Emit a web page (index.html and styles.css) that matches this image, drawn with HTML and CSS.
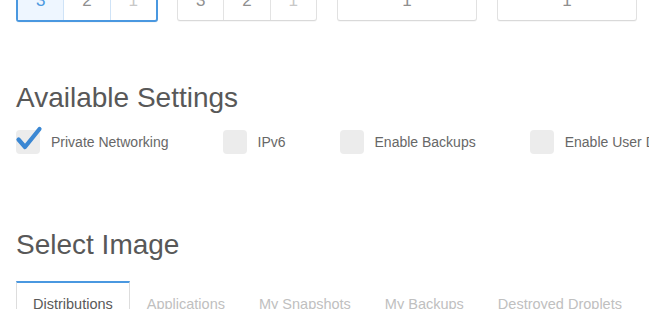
FILE: index.html
```html
<!DOCTYPE html>
<html lang="en">
<head>
<meta charset="utf-8">
<title>Create Droplet</title>
<link rel="stylesheet" href="styles.css">
</head>
<body>
<div class="page">
  <div class="plans">
    <div class="seg seg-active">
      <div class="cell cell-on">3</div>
      <div class="cell">2</div>
      <div class="cell cell-dim">1</div>
    </div>
    <div class="seg">
      <div class="cell">3</div>
      <div class="cell">2</div>
      <div class="cell cell-dim">1</div>
    </div>
    <div class="seg">
      <div class="cell">1</div>
    </div>
    <div class="seg">
      <div class="cell">1</div>
    </div>
  </div>

  <h2 class="heading heading-settings">Available Settings</h2>
  <div class="settings">
    <label class="opt">
      <span class="box box-checked">
        <svg class="tick" viewBox="0 0 26 24" width="26" height="24"><path d="M2.5 12.5 L9 20 L23.5 2" fill="none" stroke="#3a87d3" stroke-width="4.2" stroke-linecap="round" stroke-linejoin="round"/></svg>
      </span>
      <span class="opt-label">Private Networking</span>
    </label>
    <label class="opt">
      <span class="box"></span>
      <span class="opt-label">IPv6</span>
    </label>
    <label class="opt">
      <span class="box"></span>
      <span class="opt-label">Enable Backups</span>
    </label>
    <label class="opt">
      <span class="box"></span>
      <span class="opt-label">Enable User Data</span>
    </label>
  </div>

  <h2 class="heading heading-image">Select Image</h2>
  <div class="tabs">
    <div class="tab tab-active">Distributions</div>
    <div class="tab">Applications</div>
    <div class="tab">My Snapshots</div>
    <div class="tab">My Backups</div>
    <div class="tab">Destroyed Droplets</div>
  </div>
</div>
</body>
</html>
```
FILE: styles.css
```css
html, body {
  margin: 0;
  padding: 0;
  background: #fff;
  overflow: hidden;
}
body {
  font-family: "Liberation Sans", Arial, sans-serif;
  width: 649px;
  height: 309px;
}
.page {
  padding-left: 16px;
}
.plans {
  display: grid;
  grid-template-columns: repeat(4, 140px);
  column-gap: 20px;
  margin-top: -19px;
  padding-left: 1px;
}
.seg {
  display: flex;
  height: 40px;
  box-sizing: border-box;
  border: 1px solid #e1e1e1;
  border-bottom-color: #d9d9d9;
  border-radius: 3px;
  background: #fff;
  box-shadow: 0 1px 0 rgba(0,0,0,0.03);
}
.seg-active {
  border: 2px solid #4a98e0;
  height: 41px;
  margin-left: -1px;
  margin-right: -1px;
}
.cell {
  flex: 1;
  text-align: center;
  font-size: 17px;
  line-height: 38px;
  color: #8f8f8f;
  border-left: 1px solid #e3e3e3;
}
.cell:first-child {
  border-left: none;
}
.seg-active .cell {
  border-left-color: #cfe3f7;
  line-height: 36px;
}
.seg-active .cell:first-child {
  border-left: none;
}
.cell-on {
  background: #eef6ff;
  color: #4a98e0;
}
.cell-dim {
  color: #c8c8c8;
}
.heading {
  margin: 0;
  font-size: 28px;
  line-height: 32px;
  font-weight: normal;
  color: #585858;
}
.heading-settings {
  margin-top: 60px;
}
.settings {
  display: flex;
  align-items: center;
  margin-top: 16px;
  white-space: nowrap;
}
.opt {
  display: flex;
  align-items: center;
  margin-right: 54px;
  flex-shrink: 0;
}
.box {
  position: relative;
  width: 24px;
  height: 24px;
  border-radius: 4px;
  background: #ececec;
  flex-shrink: 0;
}
.tick {
  position: absolute;
  left: 0;
  top: -3px;
  overflow: visible;
}
.opt-label {
  margin-left: 11px;
  font-size: 14px;
  line-height: 16px;
  color: #676767;
}
.heading-image {
  margin-top: 75px;
}
.tabs {
  display: flex;
  margin-top: 20px;
  white-space: nowrap;
}
.tab {
  padding: 11px 16px 0;
  border: 1px solid transparent;
  border-top: 2px solid transparent;
  font-size: 14.5px;
  line-height: 20px;
  color: #c0c0c0;
  height: 40px;
}
.tab-active {
  border-color: #dddddd;
  border-top-color: #4a98e0;
  color: #595959;
}
```
